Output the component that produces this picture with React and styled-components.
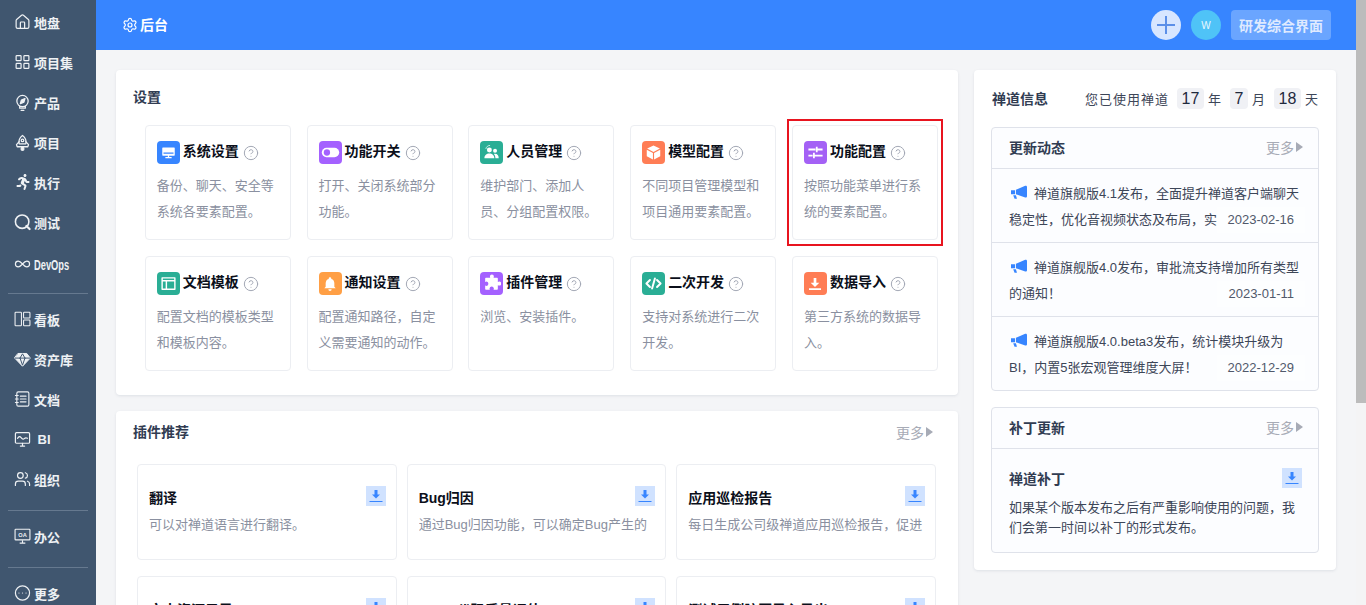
import React from "react";
import styled, { createGlobalStyle } from "styled-components";
import {
  House, LayoutGrid, Infinity as InfinityIcon, Users, CircleEllipsis,
  Settings, CircleHelp,
} from "lucide-react";
import { FaRunning } from "react-icons/fa";

const GlobalStyle = createGlobalStyle`
  html, body { margin: 0; padding: 0; height: 100%; overflow: hidden; }
  body {
    font-family: "Liberation Sans", "Noto Sans CJK SC", sans-serif;
    font-size: 13px;
    color: #313c52;
  }
  * { box-sizing: border-box; }
`;

const Shell = styled.div`
  display: flex;
  height: 100vh;
`;

const Sidebar = styled.nav`
  width: 96px;
  flex: none;
  background: #40566f;
  padding-top: 2px;
  overflow: hidden;
  color: #eef1f4;
`;

const NavRow = styled.div`
  display: flex;
  align-items: center;
  height: ${(p) => (p.$tall ? "44px" : "40px")};
  padding-left: 14px;
  gap: 3px;
  font-size: 13px;
  font-weight: 600;
  white-space: nowrap;
`;

const NavIcon = styled.span`
  width: 17px;
  height: 17px;
  flex: none;
  display: flex;
  align-items: center;
  justify-content: center;
`;

const CondensedLabel = styled.span`
  font-family: "Liberation Sans", sans-serif;
  font-weight: 700;
  font-size: 15px;
  display: inline-block;
  transform: scaleX(0.62);
  transform-origin: left center;
`;

const NavDivider = styled.div`
  height: 1px;
  background: #66798f;
  margin: ${(p) => p.$top}px 8px ${(p) => p.$bottom}px;
`;

const Scroller = styled.div`
  flex: 1;
  min-width: 0;
  height: 100vh;
  overflow: hidden;
  background: #f4f5f7;
`;

const ScrollTrack = styled.div`
  width: 10px;
  flex: none;
  background: #f4f4f5;
`;

const ScrollThumb = styled.div`
  height: 403px;
  background: #bcbcbc;
`;

const Header = styled.header`
  height: 50px;
  background: #3785ff;
  display: flex;
  align-items: center;
  justify-content: space-between;
  padding: 0 25px 0 26px;
  color: #fff;
`;

const HeaderTitle = styled.div`
  display: flex;
  align-items: center;
  gap: 2px;
  font-weight: 600;
  font-size: 14px;
`;

const HeaderLabel = styled.span`
  padding-bottom: 2px;
`;

const HeaderActions = styled.div`
  display: flex;
  align-items: center;
  gap: 10px;
`;

const PlusButton = styled.div`
  width: 30px;
  height: 30px;
  border-radius: 50%;
  background: #d7e6ff;
  display: flex;
  align-items: center;
  justify-content: center;
`;

const Avatar = styled.div`
  width: 30px;
  height: 30px;
  border-radius: 50%;
  background: #4fc3f7;
  color: #e8f7ff;
  font-size: 10px;
  display: flex;
  align-items: center;
  justify-content: center;
`;

const SwitchButton = styled.div`
  width: 100px;
  height: 30px;
  border-radius: 4px;
  background: #6aa5ff;
  color: #dfeaff;
  font-size: 14px;
  font-weight: 600;
  display: flex;
  align-items: center;
  justify-content: center;
`;

const Content = styled.main`
  display: flex;
  align-items: flex-start;
  gap: 16px;
  padding: 20px;
`;

const LeftColumn = styled.div`
  width: 842px;
  display: flex;
  flex-direction: column;
  gap: 16px;
`;

const Card = styled.section`
  position: relative;
  background: #fff;
  border-radius: 4px;
  box-shadow: 0 1px 3px rgba(30, 50, 80, 0.1);
`;

const SettingsCard = styled(Card)`
  height: 325px;
  padding: 17px 20px 0 18px;
`;

const SectionTitle = styled.h2`
  margin: 0 0 0 -1px;
  font-size: 14px;
  line-height: 20px;
  font-weight: 600;
  color: #313c52;
`;

const SettingsGrid = styled.div`
  display: grid;
  grid-template-columns: repeat(5, 1fr);
  grid-auto-rows: 115px;
  gap: 16px 15.7px;
  margin: 18px 0 0 10.8px;
`;

const SettingTile = styled.div`
  border: 1px solid #eceef2;
  border-radius: 4px;
  padding: 15px 11px 0;
`;

const TileHead = styled.div`
  display: flex;
  align-items: center;
  height: 23px;
  color: #0b0f1a;
`;

const TileBadge = styled.span`
  width: 23px;
  height: 23px;
  border-radius: 4px;
  background: ${(p) => p.$color};
  display: flex;
  align-items: center;
  justify-content: center;
  flex: none;
  margin-right: 3px;
`;

const TileName = styled.span`
  font-size: 14px;
  font-weight: 600;
  padding-bottom: 5px;
`;

const HelpMark = styled.span`
  display: flex;
  margin-left: 4px;
  color: #a3a8b5;
`;

const TileDesc = styled.p`
  margin: 9px 0 0;
  font-size: 13px;
  line-height: 26px;
  color: #8a90a0;
`;

const Highlight = styled.div`
  position: absolute;
  left: 671px;
  top: 49px;
  width: 156px;
  height: 127px;
  border: 2px solid #e8141f;
  pointer-events: none;
`;

const PluginCard = styled(Card)`
  padding: 11px 22px 16px 18px;
`;

const CardHead = styled.div`
  display: flex;
  align-items: center;
  justify-content: space-between;
  padding-right: 3px;
`;

const MoreLink = styled.span`
  display: flex;
  align-items: center;
  gap: 2px;
  color: #a7abb6;
  font-size: 14px;
  font-weight: 400;
`;

const PluginGrid = styled.div`
  display: grid;
  grid-template-columns: repeat(3, 1fr);
  grid-auto-rows: 96px;
  gap: 16px 10px;
  margin: 22px 0 0 3px;
`;

const PluginTile = styled.div`
  border: 1px solid #eceef2;
  border-radius: 4px;
  padding: 21px 10px 0 11px;
  overflow: hidden;
`;

const PluginHead = styled.div`
  display: flex;
  align-items: center;
  justify-content: space-between;
  height: 20px;
`;

const PluginName = styled.span`
  font-size: 14px;
  font-weight: 600;
  color: #0b0f1a;
  padding-top: 1px;
`;

const PluginDesc = styled.p`
  margin: 9px 0 0;
  font-size: 13px;
  line-height: 20px;
  height: 20px;
  color: #8a90a0;
  overflow: hidden;
`;

const DownloadBox = styled.span`
  width: 20px;
  height: 20px;
  background: #d0e2ff;
  display: flex;
  align-items: center;
  justify-content: center;
  flex: none;
`;

const InfoCard = styled(Card)`
  width: 362px;
  height: 500px;
  padding: 18px 17px 0 17px;
  background: #fff;
`;

const InfoHead = styled.div`
  display: flex;
  align-items: center;
  height: 21px;
  margin-left: 2px;
  font-size: 13px;
`;

const UsageText = styled.span`
  margin-left: auto;
  letter-spacing: 1px;
  color: #3d4658;
  display: flex;
  align-items: center;
  white-space: nowrap;
`;

const UsageNum = styled.span`
  display: inline-block;
  min-width: ${(p) => p.$w}px;
  height: 21px;
  line-height: 21px;
  text-align: center;
  background: #f0f1f5;
  border-radius: 4px;
  font-size: 16px;
  letter-spacing: 0;
  color: #1f2a3d;
  margin: 0 4px 0 8px;
`;

const InfoBox = styled.div`
  border: 1px solid #dfe2ea;
  border-radius: 4px;
  margin-top: ${(p) => p.$top}px;
  background: #fcfdff;
`;

const BoxHead = styled.div`
  display: flex;
  align-items: center;
  justify-content: space-between;
  height: 41px;
  padding: 0 15px 2px 17px;
  border-bottom: 1px solid #dfe2ea;
  font-weight: 600;
  font-size: 14px;
`;

const NewsItem = styled.div`
  position: relative;
  height: 74px;
  padding: 12px 15px 0 17px;
  border-bottom: 1px solid #dfe2ea;
  color: #3d4658;
  font-size: 13px;
  line-height: 26px;
  &:last-child { border-bottom: none; height: 73px; }
`;

const NewsText = styled.div`
  height: 52px;
  overflow: hidden;
`;

const Horn = styled.span`
  display: inline-block;
  width: 16px;
  height: 15px;
  margin: 0 7px 0 2px;
  vertical-align: -2px;
`;

const NewsDate = styled.span`
  position: absolute;
  right: 13px;
  bottom: 9px;
  width: 88px;
  height: 26px;
  padding-right: 11px;
  text-align: right;
  background: #fdfeff;
  color: #51596b;
`;

const PatchBody = styled.div`
  padding: 19px 16px 14px 17px;
`;

const PatchHead = styled.div`
  display: flex;
  align-items: center;
  justify-content: space-between;
  font-size: 14px;
  font-weight: 600;
  height: 20px;
  margin-bottom: 10px;
`;

const PatchText = styled.p`
  margin: 0;
  line-height: 20px;
  font-size: 13px;
  color: #3d4658;
`;

const Sketch = ({ children, size = 17, fill = "none", sw = 1.4 }) => (
  <svg width={size} height={size} viewBox="0 0 24 24" fill={fill} stroke="currentColor"
    strokeWidth={sw} strokeLinecap="round" strokeLinejoin="round">
    {children}
  </svg>
);

const BulbIcon = () => (
  <Sketch sw={1.8}>
    <circle cx="12" cy="10" r="8" />
    <path d="M8 17.5V20h8v-2.5M10 23h4" />
    <path d="M15.5 6.5l-5 2-1.5 5 5-2z" fill="currentColor" />
  </Sketch>
);

const RocketIcon = () => (
  <Sketch sw={1.8}>
    <path d="M12 2c3.5 2.5 5 6 5 9.5 0 1-.1 1.8-.3 2.5H7.300c-.2-.7-.3-1.500-.3-2.500C7 8 8.500 4.500 12 2z" />
    <path d="M7.300 11L3.500 15l1 3h15l1-3-3.800-4" />
    <circle cx="12" cy="9" r="1.800" />
    <circle cx="12" cy="21" r="2" fill="currentColor" />
  </Sketch>
);

const SearchRing = () => (
  <Sketch sw={2.2} size={18}>
    <circle cx="11.500" cy="11.500" r="9.500" />
    <path d="M17.500 17.500l4.500 4.500" strokeWidth="3" />
  </Sketch>
);

const BoardIcon = () => (
  <Sketch size={18} sw={1.500}>
    <rect x="1.500" y="2.500" width="9" height="19" rx="1" />
    <rect x="13.500" y="2.500" width="9" height="8" rx="1" />
    <rect x="13.500" y="13.500" width="9" height="8" rx="1" />
  </Sketch>
);

const GemIcon = () => (
  <Sketch>
    <path d="M6 3.500h12l5 6.500-11 11.500L1 10z" fill="currentColor" />
    <path d="M2 10h20M8.500 10L12 20l3.500-10M8.500 10L12 4l3.500 6" stroke="#40566f" strokeWidth="1.400" />
  </Sketch>
);

const NotebookIcon = () => (
  <Sketch size={18} sw={1.600}>
    <rect x="4" y="2" width="17" height="20" rx="2" />
    <path d="M9 8h8M9 12h8M9 16h8M2 7h4M2 12h4M2 17h4" />
  </Sketch>
);

const ChartScreen = () => (
  <Sketch size={18} sw={1.700}>
    <rect x="2" y="3" width="20" height="15" rx="1.500" />
    <path d="M9 22h6M12 18v4M5 11c2-3 3.500-3 5-1s3 3 4.500 1.500 2.500-1.500 4.500-.5" />
  </Sketch>
);

const OaScreen = () => (
  <svg width="18" height="18" viewBox="0 0 24 24" fill="none" stroke="currentColor" strokeWidth="1.600">
    <rect x="1.500" y="2.500" width="21" height="15" rx="1" />
    <path d="M8 22h8M12 18v4" />
    <text x="12" y="13" textAnchor="middle" fontSize="8" fontWeight="700" fill="currentColor" stroke="none"
      fontFamily="Liberation Sans, sans-serif">OA</text>
  </svg>
);

const Glyph = ({ children, size = 15 }) => (
  <svg width={size} height={size} viewBox="0 0 24 24" fill="#fff">{children}</svg>
);

const badgeIcons = {
  monitor: <Glyph><path d="M3 4h18a1 1 0 011 1v11a1 1 0 01-1 1h-8v2h4v2H7v-2h4v-2H3a1 1 0 01-1-1V5a1 1 0 011-1zm1 8v2h16v-2z" /></Glyph>,
  toggle: (
    <svg width="19" height="19" viewBox="0 0 24 24">
      <rect x="1" y="6" width="22" height="12" rx="6" fill="#fff" />
      <circle cx="7.500" cy="12" r="4" fill="#a461ff" />
    </svg>
  ),
  people: <Glyph size={17}>
    <circle cx="9" cy="8.500" r="3.500" /><circle cx="17" cy="9.500" r="2.800" />
    <path d="M2 20c0-4 3-6.500 7-6.500s7 2.500 7 6.500zM17.500 20c0-2.500-.8-4.500-2.300-6 .7-.2 1.300-.3 2-.3 3 0 5 2.300 5 6.300z" />
    <path d="M4 7c.5-3 3-5 6-5" stroke="#fff" fill="none" strokeWidth="1" />
  </Glyph>,
  cube: <Glyph size={17}><path d="M12 2l9 4.500-9 4.800-9-4.800zM2.500 8.200l8.700 4.600V22l-8.700-4.700zM21.500 8.200v9.100L12.800 22v-9.200z" /></Glyph>,
  sliders: <Glyph size={17}>
    <path d="M2 6.500h10V9H2zM15 6.500h7V9h-7zM12.500 4h2.500v7.500h-2.500zM2 15h6v2.500H2zM11 15h11v2.500H11zM8.500 12.500H11V20H8.500z" />
  </Glyph>,
  table: <Glyph size={17}><path d="M3 3h18a1 1 0 011 1v16a1 1 0 01-1 1H3a1 1 0 01-1-1V4a1 1 0 011-1zm1 6v10h4V9zm6 0v10h10V9zM4 5v2h16V5z" /></Glyph>,
  bell: <Glyph size={16}><path d="M12 2a2 2 0 012 2v.5c3 .8 4.500 3.500 4.500 6.500v5l2 2.500h-17l2-2.500v-5c0-3 1.500-5.700 4.500-6.500V4a2 2 0 012-2zM9.500 20h5a2.500 2.500 0 01-5 0z" /></Glyph>,
  puzzle: <Glyph size={19}><path d="M10 3a2.500 2.500 0 015 0c0 .7-.3 1.200-.5 1.800H19a1 1 0 011 1v4.300c.6-.2 1.200-.5 1.800-.5a2.500 2.500 0 010 5c-.6 0-1.200-.3-1.800-.5V19a1 1 0 01-1 1h-4.500c.2-.6.5-1.100.5-1.800a2.800 2.800 0 00-5.500 0c0 .7.300 1.200.5 1.800H5a1 1 0 01-1-1v-4.500c.6.200 1.200.5 1.800.5a2.800 2.800 0 000-5.500c-.6 0-1.200.3-1.800.5V5.800a1 1 0 011-1h5.500C10.300 4.200 10 3.700 10 3z" /></Glyph>,
  code: (
    <svg width="17" height="17" viewBox="0 0 24 24" fill="none" stroke="#fff" strokeWidth="2.800" strokeLinecap="round" strokeLinejoin="round">
      <path d="M7 7l-5 5 5 5M17 7l5 5-5 5M14 5l-4 14" />
    </svg>
  ),
  download: <Glyph size={16}><path d="M10 3h4v7h4.500L12 16.500 5.500 10H10zM3 18.500h18V21H3z" /></Glyph>,
};

const settings = [
  ["系统设置", "备份、聊天、安全等系统各要素配置。", "#3785ff", "monitor"],
  ["功能开关", "打开、关闭系统部分功能。", "#a461ff", "toggle"],
  ["人员管理", "维护部门、添加人员、分组配置权限。", "#2aae95", "people"],
  ["模型配置", "不同项目管理模型和项目通用要素配置。", "#ff7d55", "cube"],
  ["功能配置", "按照功能菜单进行系统的要素配置。", "#a461f5", "sliders"],
  ["文档模板", "配置文档的模板类型和模板内容。", "#2aae95", "table"],
  ["通知设置", "配置通知路径，自定义需要通知的动作。", "#ff9f45", "bell"],
  ["插件管理", "浏览、安装插件。", "#a461ff", "puzzle"],
  ["二次开发", "支持对系统进行二次开发。", "#2aae95", "code"],
  ["数据导入", "第三方系统的数据导入。", "#ff7d55", "download"],
];

const plugins = [
  ["翻译", "可以对禅道语言进行翻译。"],
  ["Bug归因", "通过Bug归因功能，可以确定Bug产生的原因。"],
  ["应用巡检报告", "每日生成公司级禅道应用巡检报告，促进使用。"],
  ["文本资源目录", "统一管理文本资源。"],
  ["sonar代码质量评估", "评估代码质量。"],
  ["测试用例脑图导入导出", "以脑图方式管理用例。"],
];

const news = [
  ["禅道旗舰版4.1发布，全面提升禅道客户端聊天稳定性，优化音视频状态及布局，实现更好体验", "2023-02-16"],
  ["禅道旗舰版4.0发布，审批流支持增加所有类型的通知！", "2023-01-11"],
  ["禅道旗舰版4.0.beta3发布，统计模块升级为BI，内置5张宏观管理维度大屏！", "2022-12-29"],
];

const DownloadIcon = () => (
  <DownloadBox>
    <svg width="14" height="14" viewBox="0 0 14 14" fill="#3785ff">
      <path d="M5.500 1h3v4.500H11L7 9.500 3 5.500h2.500zM0.500 12h13v1h-13z" />
    </svg>
  </DownloadBox>
);

const More = () => (
  <MoreLink>
    更多
    <svg width="7" height="10" viewBox="0 0 7 10" fill="#a7abb6"><path d="M0 0l7 5-7 5z" /></svg>
  </MoreLink>
);

const HornIcon = () => (
  <Horn>
    <svg width="16" height="15" viewBox="0 0 18 16" fill="#3785ff">
      <path d="M0 5.500h4.500v4.500H0zM5.500 5L16 .5c1-.4 2 .3 2 1.300v10.500c0 1-1 1.700-2 1.300L5.500 10z" />
      <path d="M2.500 11h3l1.200 4H4z" />
    </svg>
  </Horn>
);

export default function App() {
  return (
    <Shell>
      <GlobalStyle />
      <Sidebar>
        <NavRow><NavIcon><House size={18} strokeWidth={1.7} /></NavIcon>地盘</NavRow>
        <NavRow><NavIcon><LayoutGrid size={18} strokeWidth={1.7} /></NavIcon>项目集</NavRow>
        <NavRow><NavIcon><BulbIcon /></NavIcon>产品</NavRow>
        <NavRow><NavIcon><RocketIcon /></NavIcon>项目</NavRow>
        <NavRow><NavIcon><FaRunning size={16} /></NavIcon>执行</NavRow>
        <NavRow><NavIcon><SearchRing /></NavIcon>测试</NavRow>
        <NavRow $tall><NavIcon><InfinityIcon size={20} strokeWidth={1.7} /></NavIcon><CondensedLabel>DevOps</CondensedLabel></NavRow>
        <NavDivider $top={7} $bottom={5} />
        <NavRow><NavIcon><BoardIcon /></NavIcon>看板</NavRow>
        <NavRow><NavIcon><GemIcon /></NavIcon>资产库</NavRow>
        <NavRow><NavIcon><NotebookIcon /></NavIcon>文档</NavRow>
        <NavRow><NavIcon><ChartScreen /></NavIcon>&nbsp;BI</NavRow>
        <NavRow><NavIcon><Users size={18} strokeWidth={1.7} /></NavIcon>组织</NavRow>
        <NavDivider $top={11} $bottom={5} />
        <NavRow><NavIcon><OaScreen /></NavIcon>办公</NavRow>
        <NavDivider $top={11} $bottom={5} />
        <NavRow><NavIcon><CircleEllipsis size={18} strokeWidth={1.7} /></NavIcon>更多</NavRow>
      </Sidebar>

      <Scroller>
        <Header>
          <HeaderTitle><Settings size={16} strokeWidth={1.8} /><HeaderLabel>后台</HeaderLabel></HeaderTitle>
          <HeaderActions>
            <PlusButton>
              <svg width="18" height="18" viewBox="0 0 18 18" stroke="#5b8fe8" strokeWidth="2">
                <path d="M9 0v18M0 9h18" />
              </svg>
            </PlusButton>
            <Avatar>W</Avatar>
            <SwitchButton>研发综合界面</SwitchButton>
          </HeaderActions>
        </Header>

        <Content>
          <LeftColumn>
            <SettingsCard>
              <SectionTitle>设置</SectionTitle>
              <SettingsGrid>
                {settings.map(([name, desc, color, icon]) => (
                  <SettingTile key={name}>
                    <TileHead>
                      <TileBadge $color={color}>{badgeIcons[icon]}</TileBadge>
                      <TileName>{name}</TileName>
                      <HelpMark><CircleHelp size={16} strokeWidth={1.5} /></HelpMark>
                    </TileHead>
                    <TileDesc>{desc}</TileDesc>
                  </SettingTile>
                ))}
              </SettingsGrid>
              <Highlight />
            </SettingsCard>

            <PluginCard>
              <CardHead>
                <SectionTitle>插件推荐</SectionTitle>
                <More />
              </CardHead>
              <PluginGrid>
                {plugins.map(([name, desc]) => (
                  <PluginTile key={name}>
                    <PluginHead>
                      <PluginName>{name}</PluginName>
                      <DownloadIcon />
                    </PluginHead>
                    <PluginDesc>{desc}</PluginDesc>
                  </PluginTile>
                ))}
              </PluginGrid>
            </PluginCard>
          </LeftColumn>

          <InfoCard>
            <InfoHead>
              <SectionTitle>禅道信息</SectionTitle>
              <UsageText>
                您已使用禅道
                <UsageNum $w={27}>17</UsageNum>年
                <UsageNum $w={18}>7</UsageNum>月
                <UsageNum $w={27}>18</UsageNum>天
              </UsageText>
            </InfoHead>

            <InfoBox $top={18}>
              <BoxHead>更新动态<More /></BoxHead>
              {news.map(([text, date]) => (
                <NewsItem key={date}>
                  <NewsText><HornIcon />{text}</NewsText>
                  <NewsDate>{date}</NewsDate>
                </NewsItem>
              ))}
            </InfoBox>

            <InfoBox $top={16}>
              <BoxHead>补丁更新<More /></BoxHead>
              <PatchBody>
                <PatchHead>禅道补丁<DownloadIcon /></PatchHead>
                <PatchText>如果某个版本发布之后有严重影响使用的问题，我们会第一时间以补丁的形式发布。</PatchText>
              </PatchBody>
            </InfoBox>
          </InfoCard>
        </Content>
      </Scroller>

      <ScrollTrack><ScrollThumb /></ScrollTrack>
    </Shell>
  );
}
